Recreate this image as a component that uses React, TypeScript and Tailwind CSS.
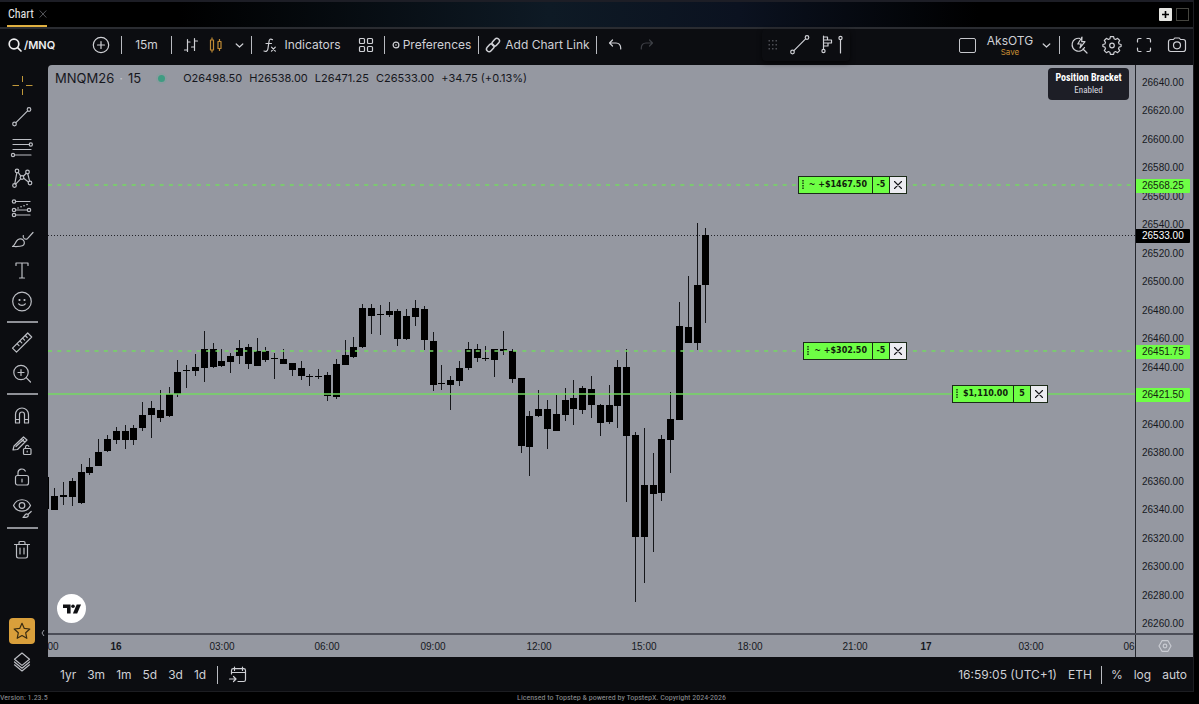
import type { ReactNode } from "react";

/* ---------- data ---------- */

// high, body top, body bottom, low
const CANDLES: number[][] = [
  [477, 477, 509, 509], [488, 496, 510, 510], [482, 495, 497, 505], [478, 481, 497, 506], [464, 472, 503, 504],
  [458, 467, 473, 475], [439, 452, 466, 466], [435, 439, 451, 452], [427, 431, 440, 444], [425, 431, 440, 449],
  [425, 428, 440, 445], [402, 415, 428, 431], [401, 408, 415, 438], [390, 410, 418, 422], [387, 394, 416, 417],
  [360, 372, 394, 397], [365, 370, 371, 388], [354, 367, 371, 376], [331, 349, 368, 382], [343, 349, 367, 368],
  [349, 361, 366, 367], [353, 356, 362, 373], [340, 348, 356, 364], [344, 347, 364, 369], [338, 351, 366, 366],
  [347, 351, 360, 362], [353, 358, 359, 379], [349, 359, 364, 364], [363, 363, 370, 376], [361, 368, 376, 380],
  [374, 376, 377, 386], [369, 376, 377, 379], [372, 375, 396, 401], [359, 364, 397, 399], [340, 355, 365, 365],
  [337, 347, 357, 358], [304, 308, 347, 348], [304, 308, 316, 334], [305, 314, 315, 335], [302, 311, 315, 317],
  [309, 311, 339, 346], [309, 316, 339, 340], [300, 308, 317, 326], [306, 309, 340, 350], [332, 341, 385, 391],
  [365, 383, 384, 390], [376, 380, 385, 410], [361, 368, 381, 386], [342, 349, 368, 370], [344, 349, 358, 362],
  [346, 358, 359, 361], [349, 349, 360, 377], [331, 349, 351, 355], [349, 351, 379, 383], [378, 378, 446, 453],
  [411, 416, 447, 476], [390, 409, 416, 417], [400, 409, 429, 449], [395, 414, 431, 431], [388, 400, 415, 421],
  [380, 398, 409, 425], [386, 388, 410, 414], [376, 389, 405, 418], [404, 405, 423, 436], [385, 405, 422, 424],
  [360, 367, 406, 428], [349, 367, 436, 502], [432, 435, 537, 602], [428, 485, 537, 583], [453, 485, 494, 552],
  [435, 439, 493, 501], [392, 419, 440, 473], [302, 326, 420, 420], [276, 327, 343, 343], [223, 285, 343, 350],
  [228, 235, 285, 323],
];

const PRICES = Array.from({ length: 20 }, (_, i) => 26640 - i * 20);
const priceY = (p: number) => Math.round(18 + (26640 - p) * 1.4237);

const PRICE_TAGS = [
  { price: 26568.25, cls: "bg-[#6eff45] text-[#14240f]" },
  { price: 26533, cls: "bg-black text-white" },
  { price: 26451.75, cls: "bg-[#6eff45] text-[#14240f]" },
  { price: 26421.5, cls: "bg-[#6eff45] text-[#14240f]" },
];

const TIMES = [
  { t: "00", x: 5 }, { t: "16", x: 68, bold: true }, { t: "03:00", x: 174 }, { t: "06:00", x: 279 },
  { t: "09:00", x: 385 }, { t: "12:00", x: 491 }, { t: "15:00", x: 596 }, { t: "18:00", x: 702 },
  { t: "21:00", x: 807 }, { t: "17", x: 878, bold: true }, { t: "03:00", x: 983 }, { t: "06", x: 1081 },
];

/* ---------- icons ---------- */

function Ico({ children, size = 28, label }: { children: ReactNode; size?: number; label?: string }) {
  return (
    <svg
      width={size}
      height={size}
      viewBox={`0 0 ${size} ${size}`}
      fill="none"
      stroke="currentColor"
      strokeWidth="1.2"
      strokeLinecap="round"
      strokeLinejoin="round"
      className="shrink-0"
      aria-hidden={label ? undefined : true}
    >
      {children}
    </svg>
  );
}

const Crosshair = () => (
  <Ico><path d="M14.500 4v6M14.500 17v6M4.500 13.500h6.500M18 13.500h6.500" stroke="#c0983a" strokeWidth="1" strokeLinecap="butt" /></Ico>
);
const TrendLine = () => (
  <Ico><circle cx="6.500" cy="21" r="1.800" /><circle cx="21" cy="6.500" r="1.800" /><path d="M7.900 19.600 19.600 7.900" /></Ico>
);
const Fib = () => (
  <Ico>
    <path d="M5 5.500h18M5 10.500h16.500M5 15.500h18M6.500 21H23" />
    <circle cx="22.800" cy="10.500" r="1.600" /><circle cx="5" cy="21" r="1.600" />
  </Ico>
);
const Pattern = () => (
  <Ico>
    <circle cx="9" cy="6" r="1.800" /><circle cx="19.500" cy="7" r="1.800" /><circle cx="14" cy="12.500" r="1.800" />
    <circle cx="6.500" cy="20.500" r="1.800" /><circle cx="22" cy="18" r="1.800" />
    <path d="m8.800 7.800-2 10.900M10.200 7.400l2.600 3.700M15.300 11.200l3-2.900M19.800 8.800l1.800 7.400M12.700 13.900l-5 5.200M15.700 13.300l4.700 3.600" />
  </Ico>
);
const Projection = () => (
  <Ico>
    <path d="M7.500 6.500H22M7.500 15H19.500M7.500 20H22" /><path d="m10 13 .1 0M13 11.800l.1 0M16 10.700l.1 0M19 9.500l.1 0" strokeWidth="1.600" />
    <circle cx="6" cy="6.500" r="1.700" /><circle cx="6" cy="15" r="1.700" /><circle cx="6" cy="20" r="1.700" /><circle cx="21" cy="15" r="1.700" />
  </Ico>
);
const Brush = () => (
  <Ico>
    <path d="M4.500 20.500c2.500-1.200 2.800-3.700 4.200-5.700 1.600-2.300 4.800-2.500 6.600-.6 1.700 1.900 1.300 4.600-.9 5.600-2.300 1-6 .7-9.900.7Z" />
    <path d="M15.300 9.500c-.8 2.700 1.900 4.600 4.200 3.200L25 6.500" />
  </Ico>
);
const TextT = () => (
  <Ico><path d="M8 8.500V6h12v2.500M14 6v15M11.500 21h5" /></Ico>
);
const Smile = () => (
  <Ico>
    <circle cx="14" cy="13.500" r="9.300" /><path d="M10.700 15.800c1.400 2 5.200 2 6.600 0" />
    <circle cx="11.500" cy="12" r=".5" fill="currentColor" /><circle cx="16.500" cy="12" r=".5" fill="currentColor" />
  </Ico>
);
const Ruler = () => (
  <Ico><path d="m4.500 19.200 15.200-15.200 4 4L8.500 23.200ZM9 14.700l2 2M11.800 11.900l2 2M14.600 9.100l2 2M17.200 6.500l2 2" /></Ico>
);
const ZoomIn = () => (
  <Ico><circle cx="13" cy="12.500" r="7.200" /><path d="m18.200 17.700 4.300 4.300M13 9.500v6M10 12.500h6" /></Ico>
);
const Magnet = () => (
  <Ico><path d="M7.500 22V13.500a6.500 6.500 0 0 1 13 0V22h-4v-8.500a2.500 2.500 0 0 0-5 0V22ZM7.500 18.500h4M16.500 18.500h4" /></Ico>
);
const PencilLock = () => (
  <Ico>
    <path d="m5 18 1-4L15.500 5l3.500 3-9.500 9.500ZM13.300 7l3.500 3M8 14.500l7.500-7" />
    <rect x="15.500" y="16.500" width="7.500" height="6" rx="1" /><path d="M17.500 16.500v-1.600a1.700 1.700 0 0 1 3.300-.5M19.200 19v1" />
  </Ico>
);
const Unlock = () => (
  <Ico><rect x="7.500" y="12.500" width="13" height="9.500" rx="2" /><path d="M10 12.500V9.700c0-4 5.500-5 7.300-1.700M14 16v3" /></Ico>
);
const EyeBrush = () => (
  <Ico>
    <path d="M5.500 11.500C9 3.800 19 3.800 22.500 11.500 19 19 9 19 5.500 11.500Z" /><circle cx="14" cy="11.500" r="2.800" />
    <path d="M15 23.300c1.500-.4 1.300-2.500 3-3.200 1.300-.5 2.500.5 2.200 1.700-.5 1.700-3.200 1.700-5.200 1.500ZM20.500 20l2.700-2.500" />
  </Ico>
);
const Trash = () => (
  <Ico><path d="M6.500 8.500h15M11 8.500V6.700c0-.8.500-1.200 1.200-1.200h3.600c.7 0 1.200.4 1.200 1.200v1.800M8.500 8.500v11.600c0 1.200.7 1.900 1.900 1.900h7.200c1.200 0 1.900-.7 1.900-1.900V8.500M12 12v6M16 12v6" /></Ico>
);
const Star = () => (
  <Ico>
    <path d="m14 6.300 2.300 5.100 5.500.6-4.100 3.800 1.100 5.500-4.800-2.800-4.800 2.800 1.100-5.500L6.200 12l5.500-.6Z" stroke="#3b2d12" />
  </Ico>
);
const Layers = () => (
  <Ico><path d="m14 5 7.500 6.200L14 17.400l-7.500-6.200ZM6.500 14l7.500 6.200L21.500 14M6.500 16.800l7.500 6.200 7.500-6.200" /></Ico>
);

const Search = () => <Ico size={14}><g strokeWidth="1.700"><circle cx="6" cy="6" r="4.800" /><path d="m9.600 9.600 3.400 3.400" /></g></Ico>;
const PlusCircle = () => <Ico size={18}><circle cx="9" cy="9" r="7.700" /><path d="M9 5.500v7M5.500 9h7" /></Ico>;
const Bars = () => <Ico size={16}><path d="M4.500 2.500v12M1.500 13h3M4.500 5H7M11.500 1.500v12M8.500 10h3M11.500 4h3" /></Ico>;
const CandleIcon = () => (
  <Ico size={16}>
    <path d="M4 .5v2.500M4 13v2.500M11.500 2v2.500M11.500 11.500V14M2.500 3h3v10h-3ZM10 4.500h3v7h-3Z" stroke="#c08a35" strokeLinecap="butt" />
  </Ico>
);
const Chevron = () => <Ico size={9}><path d="m1.200 3 3.300 3 3.300-3" /></Ico>;
const Fx = () => (
  <Ico size={16}><path d="M10.500 2.700C8.500 1.500 7.300 2.300 7 4.500L5.900 12c-.3 2.100-1.900 2.800-3.900 2M4 6.500h5.500M9.500 10.200l3.800 4M13.300 10.200l-3.800 4" /></Ico>
);
const Grid4 = () => (
  <Ico size={16}>
    <rect x="1.500" y="1.500" width="5" height="5" rx="1" /><rect x="9.500" y="1.500" width="5" height="5" rx="1" />
    <rect x="1.500" y="9.500" width="5" height="5" rx="1" /><rect x="9.500" y="9.500" width="5" height="5" rx="1" />
  </Ico>
);
const TinyGear = () => <Ico size={8}><circle cx="4" cy="4" r="2.900" strokeWidth="1.200" /><circle cx="4" cy="4" r=".8" fill="currentColor" stroke="none" /></Ico>;
const LinkIcon = () => (
  <Ico size={16}>
    <g strokeWidth="1.500">
      <rect x="-4.300" y="-2.600" width="8.600" height="5.200" rx="2.600" transform="translate(10.700 5.200) rotate(-48)" />
      <rect x="-4.300" y="-2.600" width="8.600" height="5.200" rx="2.600" transform="translate(5.300 10.800) rotate(-48)" />
    </g>
  </Ico>
);
const Undo = () => <Ico size={14}><path d="M4.500 2 1.500 5l3 3M1.500 5h6.500c3 0 4.700 2 4.700 5v1" /></Ico>;
const Redo = () => <Ico size={14}><path d="m9.500 2 3 3-3 3M12.500 5H6C3 5 1.300 7 1.300 10v1" /></Ico>;
const Flash = () => (
  <Ico size={18}>
    <path d="M9.500 2.300A6.500 6.500 0 1 0 14.500 11.500M13 13l4 4" /><path d="M12 1 7.800 8h3.400L10 12l5-6.300h-3.300Z" />
  </Ico>
);
const Gear = () => (
  <Ico size={20}>
    <path d="m8.400 1.600-.5 2.200-1.500.7-2-1.200-2.100 2.200 1.200 1.900-.6 1.600-2 .5v2l2 .6.6 1.500-1.200 2 2.100 2.100 2-1.200 1.500.7.500 2.200h3.200l.5-2.200 1.500-.7 2 1.200 2.100-2.100-1.200-2 .6-1.500 2-.6v-2l-2-.5-.6-1.600 1.200-1.900-2.100-2.200-2 1.200-1.500-.7-.5-2.200Z" />
    <circle cx="10" cy="10.500" r="2.300" />
  </Ico>
);
const Full = () => (
  <Ico size={16}><path d="M1.500 5V3c0-1 .5-1.500 1.500-1.500h2M11 1.500h2c1 0 1.500.5 1.500 1.500v2M14.500 11v2c0 1-.5 1.500-1.500 1.500h-2M5 14.500H3c-1 0-1.500-.5-1.500-1.500v-2" /></Ico>
);
const Camera = () => (
  <Ico size={20}>
    <path d="M6.500 4.500 7.700 3h4.600l1.200 1.500h2.700c1.500 0 2.300.8 2.300 2.200v7.600c0 1.400-.8 2.200-2.300 2.200H3.800c-1.500 0-2.300-.8-2.300-2.200V6.700c0-1.400.8-2.200 2.300-2.200Z" />
    <circle cx="10" cy="10.300" r="3.500" />
  </Ico>
);
const FlagTool = () => (
  <Ico size={24}>
    <path d="M3.500 3v13.300M3.500 4h4v3h-4M3.500 7h8v3h-8M3.500 10H8v3H3.500" /><circle cx="3.500" cy="18" r="1.600" />
    <path d="M20.500 7v13" /><circle cx="20.500" cy="5" r="1.600" />
  </Ico>
);
const Calendar = () => (
  <Ico size={20}>
    <path d="M3.500 9V5.500c0-1.200.6-1.800 1.800-1.800h10.400c1.200 0 1.800.6 1.800 1.800v9.200c0 1.200-.6 1.800-1.800 1.800H10M6.500 2v3.500M14.500 2v3.500M3.500 7.500h14M1.500 14h6M5.500 11.500 8 14l-2.500 2.500" />
  </Ico>
);

/* ---------- parts ---------- */

const Divider = () => <span className="h-[18px] w-px shrink-0 bg-[#b9bbc1]" />;

function Btn({ children, label, className = "" }: { children: ReactNode; label?: string; className?: string }) {
  return (
    <button type="button" aria-label={label} className={`flex shrink-0 items-center justify-center whitespace-nowrap ${className}`}>
      {children}
    </button>
  );
}

function TabBar() {
  return (
    <header className="flex h-[29px] shrink-0 items-stretch justify-between border-t-2 border-b-2 border-t-[#1d1e26] border-b-[#2a2c31] bg-[linear-gradient(90deg,#000_15%,#0e1a25_46%,#0b1220_62%,#000_82%)] pr-1 pl-[7px]">
      <div className="flex w-10 items-center justify-between border-b-2 border-[#e0b040] pl-px text-xs text-[#e4e4e6]">
        <a href="#chart" className="font-['Roboto_Condensed','Liberation_Sans_Narrow',Roboto,sans-serif]">Chart</a>
        <button type="button" aria-label="Close tab" className="text-[#55565b]">
          <Ico size={8}><path d="m1 .8 6 6.400M7 .8 1 7.200" strokeWidth="1" /></Ico>
        </button>
      </div>
      <div className="flex items-center gap-1">
        <button type="button" aria-label="Add tab" className="flex size-[13px] items-center justify-center rounded-[1px] bg-[#e6e6e2] text-black">
          <Ico size={9}><path d="M4.500 1v7M1 4.500h7" strokeWidth="1.600" strokeLinecap="butt" /></Ico>
        </button>
        <button type="button" aria-label="Layout" className="size-[13px] border border-[#45453f]" />
      </div>
    </header>
  );
}

function Toolbar() {
  return (
    <div className="relative flex h-9 shrink-0 items-center justify-between pb-1 text-xs text-[#cfd0d5]">
      <div className="flex items-center">
        <Btn className="w-[82px] !justify-start gap-0.5 pl-2 text-[11px] font-semibold text-[#eeeeef]"><Search />/MNQ</Btn>
        <Btn label="Compare" className="w-[38px]"><PlusCircle /></Btn>
        <span className="w-px" />
        <Divider />
        <Btn className="w-[49px]">15m</Btn>
        <Divider />
        <Btn label="Bars" className="ml-1.5 w-[25px]"><Bars /></Btn>
        <Btn label="Candles" className="w-[25px]"><CandleIcon /></Btn>
        <Btn label="Chart types" className="w-[23px]"><Chevron /></Btn>
        <Divider />
        <Btn className="w-[95px] gap-1.5 pl-1"><Fx />Indicators</Btn>
        <Btn label="Layouts" className="w-[37px]"><Grid4 /></Btn>
        <Divider />
        <Btn className="w-[93px] gap-[3px]"><TinyGear />Preferences</Btn>
        <Divider />
        <Btn className="w-[117px] gap-1"><LinkIcon />Add Chart Link</Btn>
        <Divider />
        <Btn label="Undo" className="ml-0.5 w-8"><Undo /></Btn>
        <Btn label="Redo" className="w-8 text-[#3d3f45]"><Redo /></Btn>
      </div>

      <div className="absolute top-0 left-[762px] flex h-8 items-center rounded bg-[#0c0d11] px-1.5 shadow-[0_2px_5px_rgba(0,0,0,0.6)]">
        <svg width="10" height="12" fill="#4c4e55" aria-hidden="true">
          {[1, 5, 9].map((y) => [0.5, 4, 7.5].map((x) => <rect key={`${x}-${y}`} x={x} y={y} width="1.500" height="1.500" />))}
        </svg>
        <Btn label="Trend line" className="ml-0.5 w-10"><TrendLine /></Btn>
        <Btn label="Anchored profile" className="w-6"><FlagTool /></Btn>
      </div>

      <div className="flex items-center">
        <Btn label="Layout frame" className="w-8"><span className="h-[15px] w-[17px] rounded-[2px] border border-[#c6c7cc]" /></Btn>
        <Btn className="w-[54px] flex-col text-xs leading-[14px]">
          <span>AksOTG</span>
          <span className="text-[8px] leading-[8px] text-[#c98f34]">Save</span>
        </Btn>
        <Btn label="Layout menu" className="mr-1 w-[18px]"><Chevron /></Btn>
        <Divider />
        <Btn label="Quick search" className="ml-0.5 w-[33px]"><Flash /></Btn>
        <Btn label="Settings" className="w-[33px]"><Gear /></Btn>
        <Btn label="Fullscreen" className="w-8"><Full /></Btn>
        <Btn label="Snapshot" className="w-[33px]"><Camera /></Btn>
      </div>
    </div>
  );
}

function Group({ items, className }: { items: [string, ReactNode][]; className: string }) {
  return (
    <div className={`flex w-full flex-col ${className}`}>
      {items.map(([label, icon]) => (
        <Btn key={label} label={label} className="w-full flex-1">{icon}</Btn>
      ))}
    </div>
  );
}

const Sep = () => <hr className="my-1 h-0.5 w-[31px] shrink-0 border-0 bg-[#8f9197]" />;

function Sidebar() {
  return (
    <aside className="relative flex w-12 shrink-0 flex-col items-center pt-1.5 pr-1 pb-[15px] text-[#bcbec4]">
      <Group
        className="h-[246px] shrink-0"
        items={[
          ["Cursor", <Crosshair />], ["Trend line", <TrendLine />], ["Fib retracement", <Fib />], ["Patterns", <Pattern />],
          ["Projection", <Projection />], ["Brush", <Brush />], ["Text", <TextT />], ["Emoji", <Smile />],
        ]}
      />
      <Sep />
      <Group className="h-[62px] shrink-0" items={[["Measure", <Ruler />], ["Zoom in", <ZoomIn />]]} />
      <Sep />
      <Group
        className="h-[124px] shrink-0"
        items={[["Magnet", <Magnet />], ["Stay in drawing mode", <PencilLock />], ["Lock", <Unlock />], ["Hide", <EyeBrush />]]}
      />
      <Sep />
      <Group className="h-[34px] shrink-0" items={[["Remove", <Trash />]]} />
      <div className="mt-auto flex flex-col items-center gap-1">
        <Btn label="Favorites" className="size-[26px] rounded bg-[#d99f3b]"><Star /></Btn>
        <Btn label="Object tree" className="h-7"><Layers /></Btn>
      </div>
      <button type="button" aria-label="Collapse" className="absolute right-[3px] bottom-[54px]">
        <svg width="4" height="8" fill="none" stroke="#9a9ca2" aria-hidden="true"><path d="M3 1 1 4l2 3" /></svg>
      </button>
    </aside>
  );
}

function OrderLine({ top, right, value, qty }: { top: number; right: string; value: string; qty: string }) {
  return (
    <div style={{ top }} className={`absolute flex h-[18px] border border-[#1b2a18] bg-[#6eff45] font-['DejaVu_Sans',sans-serif] text-[8px] font-bold text-[#10200c] ${right}`}>
      <span className="flex items-center gap-[5px] pr-[5px] pl-[3px]">
        <svg width="2" height="10" aria-hidden="true"><path d="M1 0v10" stroke="#1b3a12" strokeWidth="1.500" strokeDasharray="1.500 1" /></svg>
        {value}
      </span>
      <span className="flex w-[18px] items-center justify-center border-x border-[#1b2a18]">{qty}</span>
      <button type="button" aria-label="Cancel order" className="flex w-4 items-center justify-center bg-[#ececf1]">
        <Ico size={10}><path d="m1.500 1.500 7 7M8.500 1.500l-7 7" stroke="#15151a" strokeWidth="1.100" /></Ico>
      </button>
    </div>
  );
}

function Pane() {
  const green = "#74d862";
  return (
    <div className="relative min-w-0 flex-1 overflow-hidden">
      <svg className="absolute inset-0 h-full w-full" role="img" aria-label="MNQM26 15 minute candles">
        <line x1="0" x2="100%" y1="170.500" y2="170.500" stroke="#23242a" strokeDasharray="1 2" />
        <g transform="translate(-48 -65)">
          {CANDLES.map(([h, a, b, l], i) => {
            const x = Math.round(45.4 + i * 8.8);
            return (
              <g key={i}>
                <rect x={x} y={h} width="1" height={l - h} fill="#15161a" />
                <rect x={x - 3} y={a} width="7" height={Math.max(b - a, 1)} fill="#000" />
              </g>
            );
          })}
        </g>
        <line x1="0" x2="100%" y1="120" y2="120" stroke={green} strokeDasharray="4 5.300" strokeWidth="1.500" />
        <line x1="0" x2="100%" y1="286" y2="286" stroke={green} strokeDasharray="4 5.300" strokeWidth="1.500" />
        <line x1="0" x2="100%" y1="329" y2="329" stroke={green} strokeWidth="1.500" />
      </svg>

      <div className="absolute top-[5px] left-[7px] flex items-center whitespace-nowrap text-[#15171d]">
        <h1 className="flex gap-[5px] text-[13px] leading-4">MNQM26 <span className="text-[#c3c5cc]">·</span> 15</h1>
        <span className="ml-[17px] size-[7px] rounded-full bg-[#3f9c82] shadow-[0_0_0_2px_rgba(120,160,155,0.35)]" />
        <p className="ml-[18px] flex gap-[7px] text-[11px] leading-4">
          <span>O26498.50</span><span>H26538.00</span><span>L26471.25</span><span>C26533.00</span><span>+34.75 (+0.13%)</span>
        </p>
      </div>

      <div className="absolute top-[3px] right-1.5 flex h-8 w-[81px] flex-col items-center justify-center rounded bg-[#1d1e26] font-['Roboto_Condensed','Liberation_Sans_Narrow',Roboto,sans-serif] text-[10px] leading-[13px] whitespace-nowrap text-[#dcdce0]">
        <strong className="font-bold text-white">Position Bracket</strong>
        <span className="text-[9px]">Enabled</span>
      </div>

      <OrderLine top={111} right="right-[228px]" value="~ +$1467.50" qty="-5" />
      <OrderLine top={277} right="right-[228px]" value="~ +$302.50" qty="-5" />
      <OrderLine top={320} right="right-[87px]" value="$1,110.00" qty="5" />

      <a href="#tradingview" aria-label="TradingView" className="absolute bottom-2.5 left-[9px] flex size-[29px] items-center justify-center rounded-full bg-white">
        <svg width="18" height="10" viewBox="0 0 18 10" fill="#101114" aria-hidden="true">
          <path d="M0 .5h7.600v9H4V4H0Z" /><circle cx="10" cy="2.300" r="1.800" /><path d="M13.700.5H18l-3.800 9H9.900Z" />
        </svg>
      </a>
    </div>
  );
}

function Chart() {
  return (
    <main className="flex min-h-0 flex-1 flex-col overflow-hidden rounded-tl bg-[#9598a1] text-[#16181e]">
      <div className="flex min-h-0 flex-1">
        <Pane />
        <div className="relative w-[58px] shrink-0 overflow-hidden border-l border-[#24262c] font-['Liberation_Sans',Arial,sans-serif] text-[10px]">
          {PRICES.map((p) => (
            <span key={p} style={{ top: priceY(p) }} className="absolute left-1.5 -translate-y-1/2 leading-3">{p.toFixed(2)}</span>
          ))}
          {PRICE_TAGS.map(({ price, cls }) => (
            <span key={price} style={{ top: priceY(price) + 1 }} className={`absolute left-0 flex h-3.5 w-[54px] -translate-y-1/2 items-center rounded-r-[1px] pl-1.5 leading-3 ${cls}`}>
              {price.toFixed(2)}
            </span>
          ))}
        </div>
      </div>
      <div className="flex h-6 shrink-0 border-t-2 border-[#4b4d57] font-['Liberation_Sans',Arial,sans-serif]">
        <div className="relative min-w-0 flex-1 overflow-hidden">
          {TIMES.map(({ t, x, bold }) => (
            <span key={x} style={{ left: x }} className={`absolute top-1.5 -translate-x-1/2 text-[10px] leading-3 ${bold ? "font-bold" : ""}`}>{t}</span>
          ))}
        </div>
        <button type="button" aria-label="Axis settings" className="flex w-[58px] items-center justify-center border-l border-[#24262c] text-[#c9cbd2]">
          <Ico size={14}><path d="M4 1.700h6L13 7l-3 5.300H4L1 7Z" /><circle cx="7" cy="7" r="1.800" /></Ico>
        </button>
      </div>
    </main>
  );
}

function BottomBar() {
  return (
    <div className="flex h-[34px] shrink-0 items-center justify-between pt-0.5 pr-1.5 pl-3 text-xs text-[#cfd0d5]">
      <div className="flex items-center">
        <div className="flex gap-[11px]">
          {["1yr", "3m", "1m", "5d", "3d", "1d"].map((r) => <button key={r} type="button">{r}</button>)}
        </div>
        <span className="ml-[11px] flex"><Divider /></span>
        <Btn label="Go to date" className="ml-2.5"><Calendar /></Btn>
      </div>
      <div className="flex items-center gap-[11px]">
        <button type="button">16:59:05 (UTC+1)</button>
        <button type="button">ETH</button>
        <span className="-mx-0.5 flex"><Divider /></span>
        <button type="button">%</button>
        <button type="button">log</button>
        <button type="button">auto</button>
      </div>
    </div>
  );
}

export default function App() {
  return (
    <div className="flex h-screen min-h-[704px] flex-col bg-black font-['Inter',sans-serif]">
      <div className="mr-[5px] flex min-h-0 flex-1 flex-col border-r border-b border-[#1c1d21] bg-[#0c0d11]">
        <TabBar />
        <Toolbar />
        <div className="flex min-h-0 flex-1">
          <Sidebar />
          <div className="flex min-w-0 flex-1 flex-col">
            <Chart />
            <BottomBar />
          </div>
        </div>
      </div>
      <footer className="grid h-3 shrink-0 grid-cols-[1fr_auto_1fr] items-center font-['Roboto_Condensed','Liberation_Sans_Narrow',Roboto,sans-serif] text-[8px] leading-3 text-[#8f9094]">
        <span>Version: 1.23.5</span>
        <span className="pl-11">Licensed to Topstep &amp; powered by TopstepX. Copyright 2024-2026</span>
      </footer>
    </div>
  );
}
